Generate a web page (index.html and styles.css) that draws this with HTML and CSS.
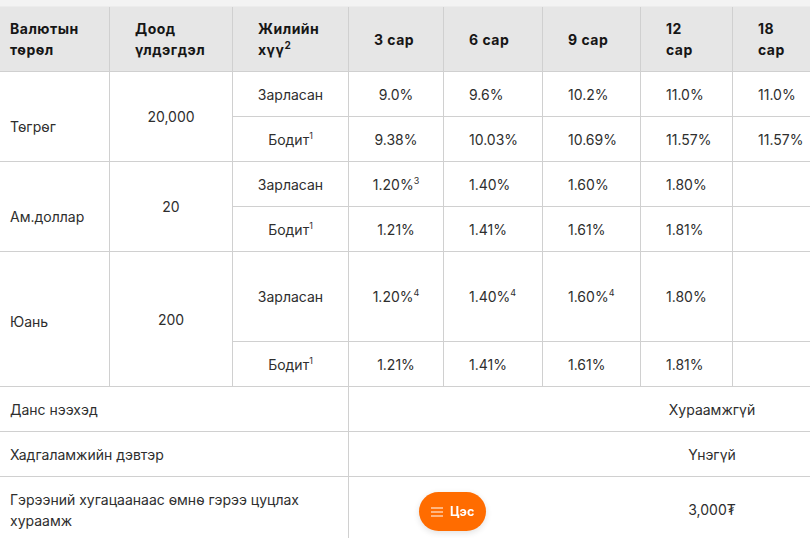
FILE: index.html
```html
<!DOCTYPE html>
<html lang="mn">
<head>
<meta charset="utf-8">
<title>Хадгаламж</title>
<link rel="stylesheet" href="styles.css">
</head>
<body>
<div class="topbar"></div>
<div class="wrap">
<table class="rates">
  <colgroup>
    <col class="w1"><col class="w2"><col class="w3"><col class="w4"><col class="w5"><col class="w6"><col class="w7"><col class="w8"><col class="w9">
  </colgroup>
  <thead>
    <tr class="head">
      <th class="first">Валютын<br>төрөл</th>
      <th>Доод<br>үлдэгдэл</th>
      <th>Жилийн<br>хүү<sup>2</sup></th>
      <th>3 сар</th>
      <th>6 сар</th>
      <th>9 сар</th>
      <th>12<br>сар</th>
      <th>18<br>сар</th>
      <th></th>
    </tr>
  </thead>
  <tbody>
    <tr class="r45">
      <td class="first low" rowspan="2">Төгрөг</td>
      <td class="c" rowspan="2">20,000</td>
      <td class="c">Зарласан</td>
      <td class="c">9.0%</td>
      <td>9.6%</td>
      <td>10.2%</td>
      <td>11.0%</td>
      <td>11.0%</td>
      <td></td>
    </tr>
    <tr class="r45">
      <td class="c">Бодит<sup>1</sup></td>
      <td class="c">9.38%</td>
      <td>10.03%</td>
      <td>10.69%</td>
      <td>11.57%</td>
      <td>11.57%</td>
      <td></td>
    </tr>
    <tr class="r45">
      <td class="first low" rowspan="2">Ам.доллар</td>
      <td class="c" rowspan="2">20</td>
      <td class="c">Зарласан</td>
      <td class="c">1.20%<sup>3</sup></td>
      <td>1.40%</td>
      <td>1.60%</td>
      <td>1.80%</td>
      <td></td>
      <td></td>
    </tr>
    <tr class="r45">
      <td class="c">Бодит<sup>1</sup></td>
      <td class="c">1.21%</td>
      <td>1.41%</td>
      <td>1.61%</td>
      <td>1.81%</td>
      <td></td>
      <td></td>
    </tr>
    <tr class="r90">
      <td class="first lowish" rowspan="2">Юань</td>
      <td class="c" rowspan="2">200</td>
      <td class="c">Зарласан</td>
      <td class="c">1.20%<sup>4</sup></td>
      <td>1.40%<sup>4</sup></td>
      <td>1.60%<sup>4</sup></td>
      <td>1.80%</td>
      <td></td>
      <td></td>
    </tr>
    <tr class="r45">
      <td class="c">Бодит<sup>1</sup></td>
      <td class="c">1.21%</td>
      <td>1.41%</td>
      <td>1.61%</td>
      <td>1.81%</td>
      <td></td>
      <td></td>
    </tr>
    <tr class="r45">
      <td class="first" colspan="3">Данс нээхэд</td>
      <td class="c" colspan="6">Хураамжгүй</td>
    </tr>
    <tr class="r45">
      <td class="first" colspan="3">Хадгаламжийн дэвтэр</td>
      <td class="c" colspan="6">Үнэгүй</td>
    </tr>
    <tr class="rlast">
      <td class="first" colspan="3">Гэрээний хугацаанаас өмнө гэрээ цуцлах<br>хураамж</td>
      <td class="c" colspan="6">3,000₮</td>
    </tr>
  </tbody>
</table>
</div>
<button class="menu-btn" type="button">
  <svg class="menu-icon" width="12" height="10" viewBox="0 0 12 10" aria-hidden="true">
    <path d="M0 1h12M0 5h12M0 9h12" stroke="#fff" stroke-width="1.2" fill="none"/>
  </svg>
  <span>Цэс</span>
</button>
</body>
</html>
```
FILE: styles.css
```css
html, body {
  margin: 0;
  padding: 0;
  background: #fff;
}
body {
  font-family: Inter, "Noto Sans", sans-serif;
  font-size: 14px;
  line-height: 21px;
  color: #2e2e2e;
  overflow: hidden;
}
.topbar {
  height: 6px;
  background: #f3f3f3;
  border-bottom: 1px solid #ececec;
}
.wrap {
  overflow: hidden;
  width: 100%;
}
.rates {
  border-collapse: collapse;
  table-layout: fixed;
  width: 1076px;
  margin-left: -1px;
  margin-top: -1px;
}
.w1 { width: 110px; }
.w2 { width: 123px; }
.w3 { width: 116px; }
.w4 { width: 95px; }
.w5 { width: 99px; }
.w6 { width: 98px; }
.w7 { width: 92px; }
.w8 { width: 92px; }
.w9 { width: 251px; }

.rates th,
.rates td {
  border: 1px solid #d0d0d0;
  padding: 0 10px 0 25px;
  vertical-align: middle;
  text-align: left;
  white-space: nowrap;
}
.rates th {
  background: #e6e6e6;
  font-weight: 700;
  letter-spacing: 0.5px;
  color: #161616;
  height: 64px;
}
.rates .first {
  padding-left: 10px;
}
.rates .first.low {
  padding-top: 20px;
}
.rates .first.lowish {
  padding-top: 5px;
}
.rates td.c {
  text-align: center;
  padding-left: 0;
  padding-right: 0;
}
.r45 td { height: 44px; }
.r90 td { height: 89px; }
.rlast td { height: 65px; }

sup {
  font-size: 9px;
  line-height: 0;
  vertical-align: 0;
  position: relative;
  top: -6px;
}
th sup {
  font-size: 10px;
  top: -6px;
}

.menu-btn {
  position: fixed;
  left: 419px;
  top: 492px;
  width: 67px;
  height: 39px;
  border: 0;
  border-radius: 20px;
  background: #ff6c00;
  color: #fff;
  display: flex;
  align-items: center;
  gap: 7px;
  padding: 0 0 0 12px;
  font-family: Inter, "Noto Sans", sans-serif;
  font-weight: 700;
  font-size: 12.5px;
  box-shadow: 0 2px 6px rgba(0,0,0,0.12);
}
.menu-icon { display: block; }
```
